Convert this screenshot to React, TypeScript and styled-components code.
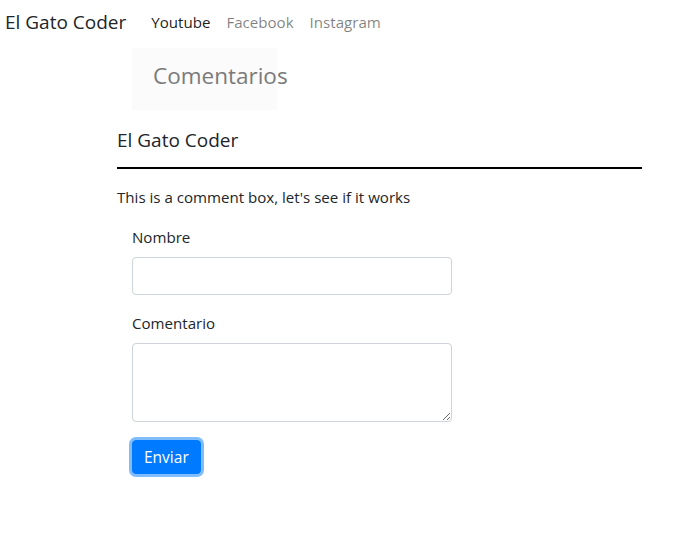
import styled, { createGlobalStyle } from "styled-components";

const GlobalStyle = createGlobalStyle`
  body {
    margin: 0;
    background: #fff;
    color: #212529;
    font-family: "Open Sans", "Noto Sans", sans-serif;
    font-size: 15.1px;
    line-height: 24px;
  }
  * {
    box-sizing: border-box;
  }
`;

const links = [
  { label: "Youtube", active: true },
  { label: "Facebook", active: false },
  { label: "Instagram", active: false },
];

const App = () => {
  return (
    <>
      <GlobalStyle />
      <Navbar>
        <Brand>El Gato Coder</Brand>
        <NavList>
          {links.map((link) => (
            <NavLink key={link.label} $active={link.active}>
              {link.label}
            </NavLink>
          ))}
        </NavList>
      </Navbar>

      <Main>
        <Banner>
          <BannerTitle>Comentarios</BannerTitle>
        </Banner>

        <Heading>El Gato Coder</Heading>
        <Divider />
        <Intro>This is a comment box, let's see if it works</Intro>

        <Form onSubmit={(e) => e.preventDefault()}>
          <Field>
            <Label htmlFor="nombre">Nombre</Label>
            <Input id="nombre" type="text" />
          </Field>
          <Field>
            <Label htmlFor="comentario">Comentario</Label>
            <TextArea id="comentario" />
          </Field>
          <SubmitButton type="submit">Enviar</SubmitButton>
        </Form>
      </Main>
    </>
  );
};

const Navbar = styled.nav`
  display: flex;
  align-items: center;
  height: 43px;
  padding: 0 5px;
`;

const Brand = styled.a`
  font-size: 19px;
  color: #212529;
  margin-right: 17px;
  white-space: nowrap;
`;

const NavList = styled.ul`
  display: flex;
  list-style: none;
  margin: 0;
  padding: 0;
`;

const NavLink = styled.li<{ $active: boolean }>`
  padding: 0 8px;
  color: ${(p) => (p.$active ? "rgba(0, 0, 0, 0.9)" : "rgba(0, 0, 0, 0.5)")};
  cursor: pointer;
`;

const Main = styled.main`
  width: 642px;
  padding: 0 0 40px 117px;
`;

const Banner = styled.div`
  margin: 5px 0 0 15px;
  width: 145px;
  height: 62px;
  background: #fbfbfb;
  padding: 0 0 6px 21px;
  display: flex;
  align-items: center;
`;

const BannerTitle = styled.h1`
  margin: 0;
  font-size: 22.5px;
  font-weight: 400;
  color: #7a7a7a;
  white-space: nowrap;
`;

const Heading = styled.h2`
  margin: 16px 0 0;
  font-size: 19px;
  font-weight: 400;
  line-height: 28px;
`;

const Divider = styled.hr`
  margin: 13px 0 0;
  border: 0;
  border-top: 2px solid #000;
`;

const Intro = styled.p`
  margin: 16px 0 0;
`;

const Form = styled.form`
  display: flex;
  flex-direction: column;
  align-items: flex-start;
  margin: 16px 0 0 15px;
  width: 320px;
`;

const Field = styled.div`
  display: flex;
  flex-direction: column;
  align-self: stretch;
  gap: 8px;
  margin-bottom: 16px;
`;

const Label = styled.label`
  color: #212529;
`;

const Input = styled.input`
  height: 38px;
  padding: 6px 12px;
  font: inherit;
  border: 1px solid #ced4da;
  border-radius: 4px;
`;

const TextArea = styled.textarea`
  height: 79px;
  padding: 6px 12px;
  font: inherit;
  border: 1px solid #ced4da;
  border-radius: 4px;
  resize: vertical;
`;

const SubmitButton = styled.button`
  margin-top: 2px;
  height: 34px;
  padding: 0 11px;
  font: inherit;
  font-size: 15.5px;
  color: #fff;
  background: #007bff;
  border: 1px solid #007bff;
  border-radius: 4px;
  box-shadow: 0 0 0 3px rgba(0, 123, 255, 0.5);
  cursor: pointer;
`;

export default App;
